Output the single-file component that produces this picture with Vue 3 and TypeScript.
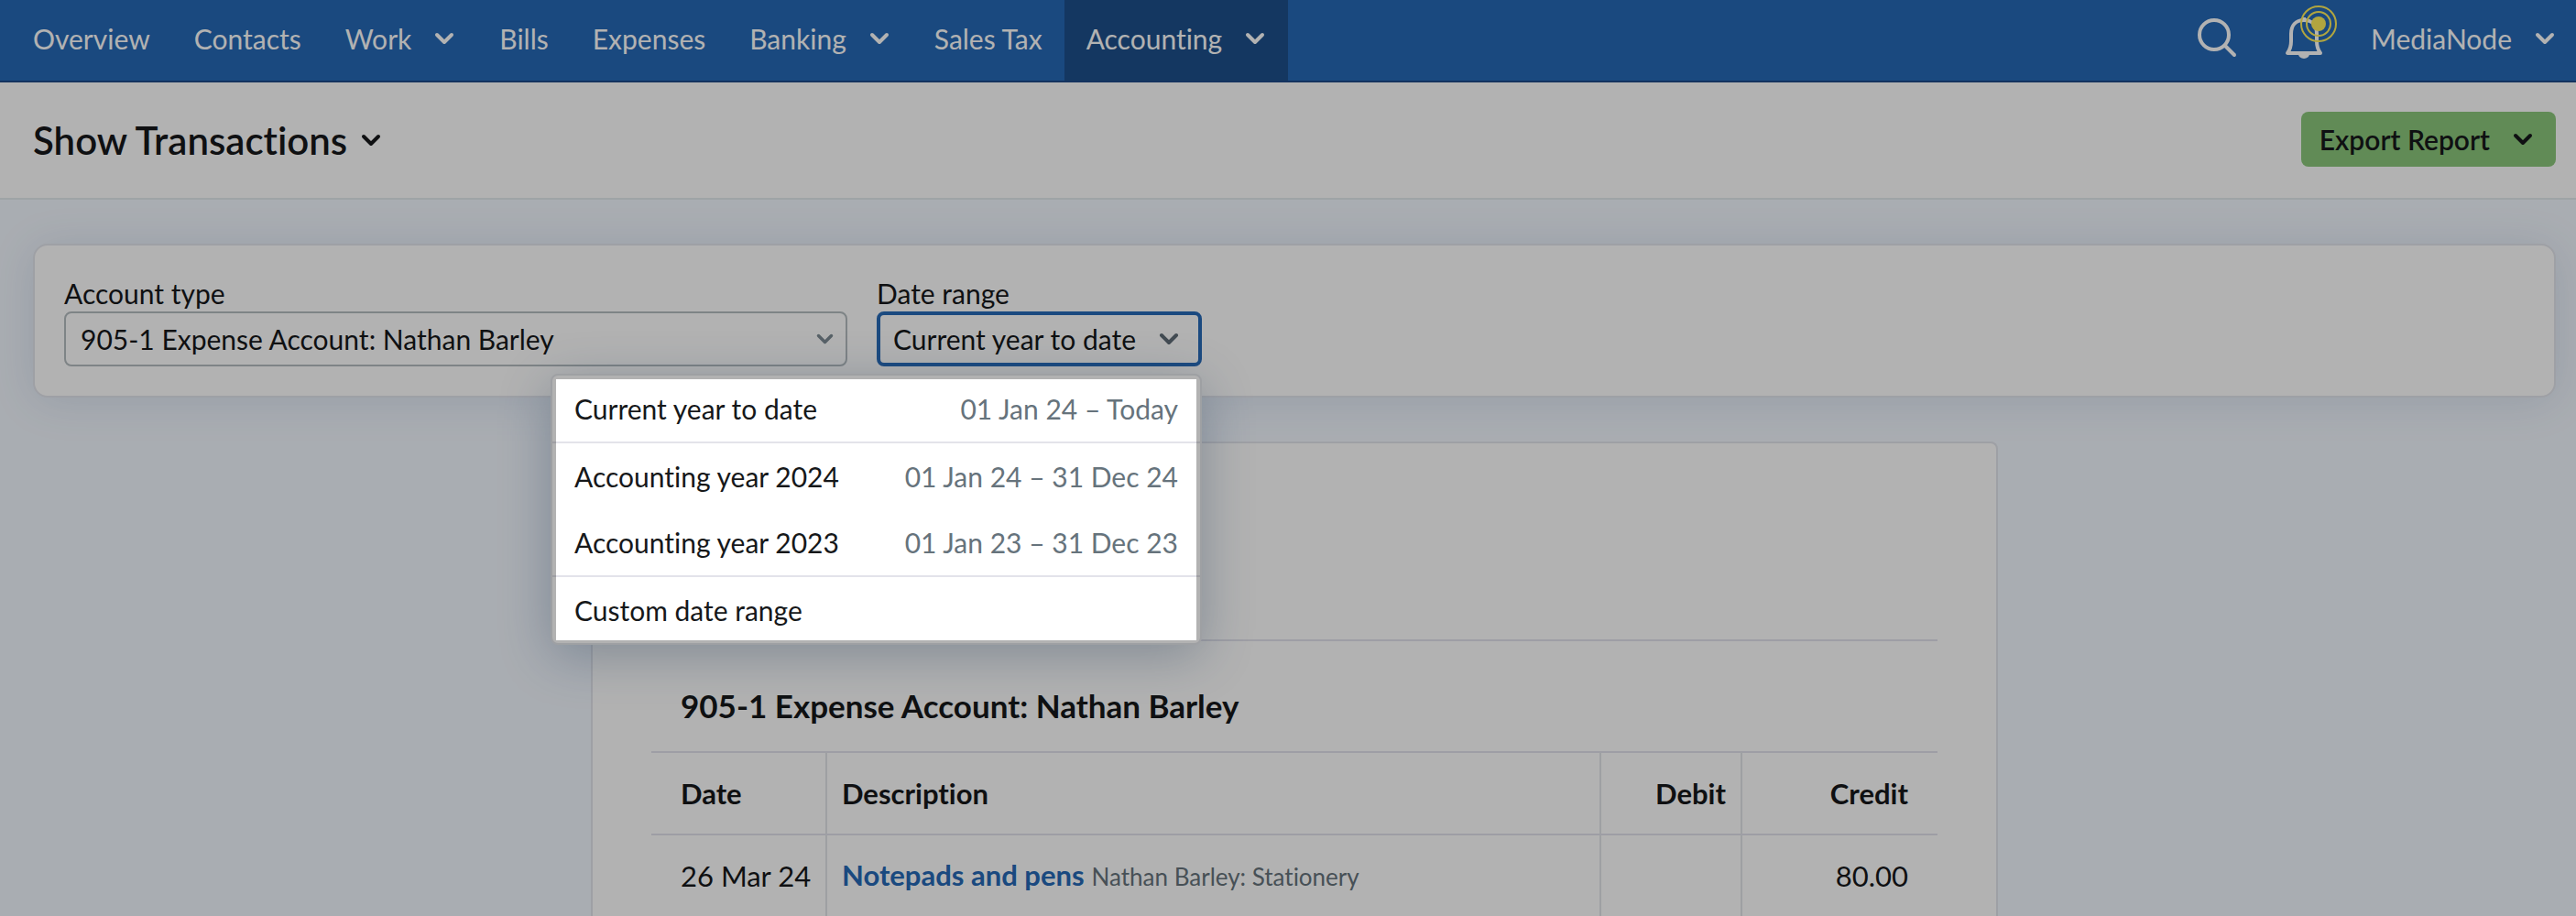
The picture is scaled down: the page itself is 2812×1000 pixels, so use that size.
<script setup lang="ts">
import { ref } from 'vue'

interface NavItem {
  label: string
  menu?: boolean
  active?: boolean
}

interface RangeOption {
  label: string
  dates?: string
}

interface Transaction {
  date: string
  title: string
  detail: string
  debit: string
  credit: string
}

const navItems: NavItem[] = [
  { label: 'Overview' },
  { label: 'Contacts' },
  { label: 'Work', menu: true },
  { label: 'Bills' },
  { label: 'Expenses' },
  { label: 'Banking', menu: true },
  { label: 'Sales Tax' },
  { label: 'Accounting', menu: true, active: true },
]

const accounts: string[] = ['905-1 Expense Account: Nathan Barley']
const account = ref(accounts[0])

const rangeGroups: RangeOption[][] = [
  [{ label: 'Current year to date', dates: '01 Jan 24 – Today' }],
  [
    { label: 'Accounting year 2024', dates: '01 Jan 24 – 31 Dec 24' },
    { label: 'Accounting year 2023', dates: '01 Jan 23 – 31 Dec 23' },
  ],
  [{ label: 'Custom date range' }],
]
const range = ref('Current year to date')
const menuOpen = ref(true)

function choose(option: RangeOption) {
  range.value = option.label
  menuOpen.value = false
}

const transactions: Transaction[] = [
  {
    date: '26 Mar 24',
    title: 'Notepads and pens',
    detail: 'Nathan Barley: Stationery',
    debit: '',
    credit: '80.00',
  },
]
</script>

<template>
  <div class="page">
    <header class="topbar">
      <nav class="nav" aria-label="Main">
        <a
          v-for="item in navItems"
          :key="item.label"
          href="#"
          class="nav-item"
          :class="{ active: item.active }"
        >
          {{ item.label }}
          <svg v-if="item.menu" class="chevron" viewBox="0 0 24 16" aria-hidden="true">
            <path d="M4 4l8 8 8-8" />
          </svg>
        </a>
      </nav>
      <div class="tools">
        <button type="button" class="tool" aria-label="Search">
          <svg width="44" height="44" viewBox="0 0 44 44" fill="none" stroke="currentColor" stroke-width="4">
            <circle cx="18" cy="18" r="16" />
            <path d="M30 30l10 10" stroke-linecap="round" />
          </svg>
        </button>
        <button type="button" class="tool" aria-label="Notifications">
          <svg class="bell" width="60" height="60" viewBox="0 0 60 60" fill="none">
            <path
              d="M5 52h36c-3-4-4-7-4-13V31c0-9-5-15-14-15S9 22 9 31v8c0 6-1 9-4 13z"
              stroke="currentColor"
              stroke-width="4"
              stroke-linejoin="round"
            />
            <path d="M17 53h12a6 5 0 0 1-12 0z" fill="currentColor" />
            <path d="M21 15h4" stroke="currentColor" stroke-width="4" />
            <circle cx="39" cy="20" r="19" class="ring" />
            <circle cx="39" cy="20" r="13" class="ring" />
            <circle cx="39" cy="20" r="8" class="dot" />
          </svg>
        </button>
        <button type="button" class="company">
          MediaNode
          <svg class="chevron" viewBox="0 0 24 16" aria-hidden="true"><path d="M4 4l8 8 8-8" /></svg>
        </button>
      </div>
    </header>

    <section class="titlebar">
      <h1>
        <button type="button" class="title">
          Show Transactions
          <svg class="chevron" viewBox="0 0 24 16" aria-hidden="true"><path d="M4 4l8 8 8-8" /></svg>
        </button>
      </h1>
      <button type="button" class="export">
        Export Report
        <svg class="chevron" viewBox="0 0 24 16" aria-hidden="true"><path d="M4 4l8 8 8-8" /></svg>
      </button>
    </section>

    <main class="content">
      <form class="filters" @submit.prevent>
        <div class="field account">
          <label for="account-type">Account type</label>
          <div class="select-wrap">
            <select id="account-type" v-model="account">
              <option v-for="name in accounts" :key="name">{{ name }}</option>
            </select>
            <svg class="chevron" viewBox="0 0 24 16" aria-hidden="true"><path d="M4 4l8 8 8-8" /></svg>
          </div>
        </div>
        <div class="field range">
          <label for="date-range">Date range</label>
          <button
            id="date-range"
            type="button"
            class="range-button"
            aria-haspopup="menu"
            :aria-expanded="menuOpen"
            @click="menuOpen = !menuOpen"
          >
            {{ range }}
            <svg class="chevron" viewBox="0 0 24 16" aria-hidden="true"><path d="M4 4l8 8 8-8" /></svg>
          </button>
          <div v-if="menuOpen" class="menu" role="menu">
            <div v-for="(group, index) in rangeGroups" :key="index" class="menu-group" role="group">
              <button
                v-for="option in group"
                :key="option.label"
                type="button"
                class="menu-item"
                role="menuitem"
                @click="choose(option)"
              >
                <span>{{ option.label }}</span>
                <span v-if="option.dates" class="dates">{{ option.dates }}</span>
              </button>
            </div>
          </div>
        </div>
      </form>

      <article class="report">
        <h2>905-1 Expense Account: Nathan Barley</h2>
        <table>
          <thead>
            <tr>
              <th scope="col" class="date">Date</th>
              <th scope="col">Description</th>
              <th scope="col" class="debit">Debit</th>
              <th scope="col" class="credit">Credit</th>
            </tr>
          </thead>
          <tbody>
            <tr v-for="row in transactions" :key="row.title">
              <td class="date">{{ row.date }}</td>
              <td>
                <a href="#">{{ row.title }}</a> <small>{{ row.detail }}</small>
              </td>
              <td class="debit">{{ row.debit }}</td>
              <td class="credit">{{ row.credit }}</td>
            </tr>
          </tbody>
        </table>
      </article>
    </main>
  </div>
</template>

<style>
body {
  margin: 0;
}
</style>

<style scoped>
.page {
  display: flex;
  flex-direction: column;
  min-height: 100vh;
  overflow: hidden;
  background: #f3f8ff;
  color: #16181a;
  font-family: Lato, 'Liberation Sans', sans-serif;
  font-size: 30px;
  font-variant-ligatures: none;
  line-height: 40px;
}

.page *,
.page *::after {
  box-sizing: border-box;
}

button,
select {
  margin: 0;
  padding: 0;
  border: 0;
  background: none;
  color: inherit;
  font: inherit;
  font-variant-ligatures: none;
  text-align: left;
  white-space: nowrap;
}

.chevron {
  flex: none;
  width: 24px;
  height: 16px;
  fill: none;
  stroke: currentColor;
  stroke-width: 4;
  stroke-linecap: round;
  stroke-linejoin: round;
}

.topbar {
  display: flex;
  justify-content: space-between;
  height: 90px;
  padding: 0 22px 0 12px;
  border-bottom: 2px solid #1d4a89;
  background: #2669b6;
  color: #fff;
}

.nav,
.nav-item,
.tools,
.company {
  display: flex;
  align-items: center;
}

.nav {
  align-items: stretch;
}

.nav-item {
  gap: 24px;
  padding: 0 24px 4px;
  color: inherit;
  text-decoration: none;
  white-space: nowrap;
}

.nav-item.active {
  background: #1d508c;
}

.tools {
  padding-bottom: 4px;
}

.tool {
  display: flex;
  margin-right: 49px;
}

.bell {
  margin-right: -13px;
  margin-bottom: 12px;
}

.ring {
  stroke: #feed5b;
  stroke-width: 2;
}

.dot {
  fill: #feed5b;
}

.company {
  gap: 24px;
}

.titlebar {
  display: flex;
  align-items: center;
  justify-content: space-between;
  height: 128px;
  padding: 0 22px 0 36px;
  border-bottom: 2px solid #e3ebee;
  background: #fff;
}

h1,
h2 {
  margin: 0;
}

.title {
  display: flex;
  align-items: center;
  gap: 14px;
  font-size: 42px;
  font-weight: 600;
  line-height: 48px;
}

.export {
  display: flex;
  align-items: center;
  gap: 24px;
  height: 60px;
  margin-bottom: 2px;
  padding: 0 24px 0 20px;
  border-radius: 8px;
  background: #8cc87b;
  font-weight: 600;
}

.content {
  display: flex;
  flex: 1;
  flex-direction: column;
  padding: 48px 22px 0 36px;
}

.filters {
  display: flex;
  gap: 32px;
  padding: 32px;
  border: 2px solid #e3e5ec;
  border-radius: 16px;
  background: #fff;
  box-shadow: 0 4px 48px rgba(60, 95, 140, 0.14);
}

.field {
  display: flex;
  flex-direction: column;
}

.account {
  flex: 0 1 855px;
}

.range {
  position: relative;
}

.select-wrap {
  display: grid;
  align-items: center;
}

.select-wrap > * {
  grid-area: 1 / 1;
}

.select-wrap .chevron {
  justify-self: end;
  width: 21px;
  margin-right: 14px;
  color: #7e8c95;
  pointer-events: none;
}

select {
  width: 100%;
  height: 60px;
  padding: 0 48px 0 16px;
  border: 2px solid #b5bdc0;
  border-radius: 8px;
  appearance: none;
}

.range-button {
  display: flex;
  align-items: center;
  justify-content: space-between;
  width: 355px;
  height: 60px;
  padding: 0 20px 0 14px;
  border: 4px solid #286bb8;
  border-radius: 8px;
}

.range-button .chevron {
  color: #606d77;
}

.menu {
  position: absolute;
  top: calc(100% + 8px);
  right: 0;
  z-index: 1;
  width: 711px;
  border: 2px solid #e3e5ea;
  border-radius: 8px;
  background: #fff;
  box-shadow: 0 12px 56px rgba(30, 70, 115, 0.3);
}

/* Dims everything outside the open menu. */
.menu::after {
  content: '';
  position: absolute;
  inset: 4px 4px 3px;
  box-shadow: 0 0 0 4000px rgba(0, 0, 0, 0.3);
  pointer-events: none;
}

.menu-group + .menu-group {
  border-top: 2px solid #e3e3ea;
}

.menu-item {
  display: flex;
  align-items: center;
  justify-content: space-between;
  width: 100%;
  height: 72px;
  padding: 0 24px;
}

.dates {
  color: #66737c;
}

.report {
  flex: 1;
  width: 100%;
  max-width: 1536px;
  margin: 48px auto 0;
  padding: 214px 64px 0;
  border: 2px solid #e3e5ec;
  border-bottom: 0;
  border-radius: 8px 8px 0 0;
  background: #fff;
}

h2 {
  padding: 50px 32px 30px;
  border-top: 2px solid #e3e3ec;
  font-size: 35px;
  font-weight: 700;
  line-height: 40px;
}

table {
  width: 100%;
  border-collapse: separate;
  border-spacing: 0;
  table-layout: fixed;
  font-size: 31px;
}

th,
td {
  height: 90px;
  padding: 0 16px;
  border-top: 2px solid #e3e3ec;
  border-left: 2px solid #e3e5ea;
  text-align: left;
  white-space: nowrap;
}

.date {
  width: 190px;
  padding: 0 0 0 32px;
  border-left: 0;
}

.debit,
.credit {
  width: 154px;
  text-align: right;
}

.credit {
  width: 215px;
  padding-right: 32px;
}

td a {
  color: #2669b6;
  font-weight: 700;
  text-decoration: none;
}

small {
  color: #66737c;
  font-size: 26px;
}
</style>
